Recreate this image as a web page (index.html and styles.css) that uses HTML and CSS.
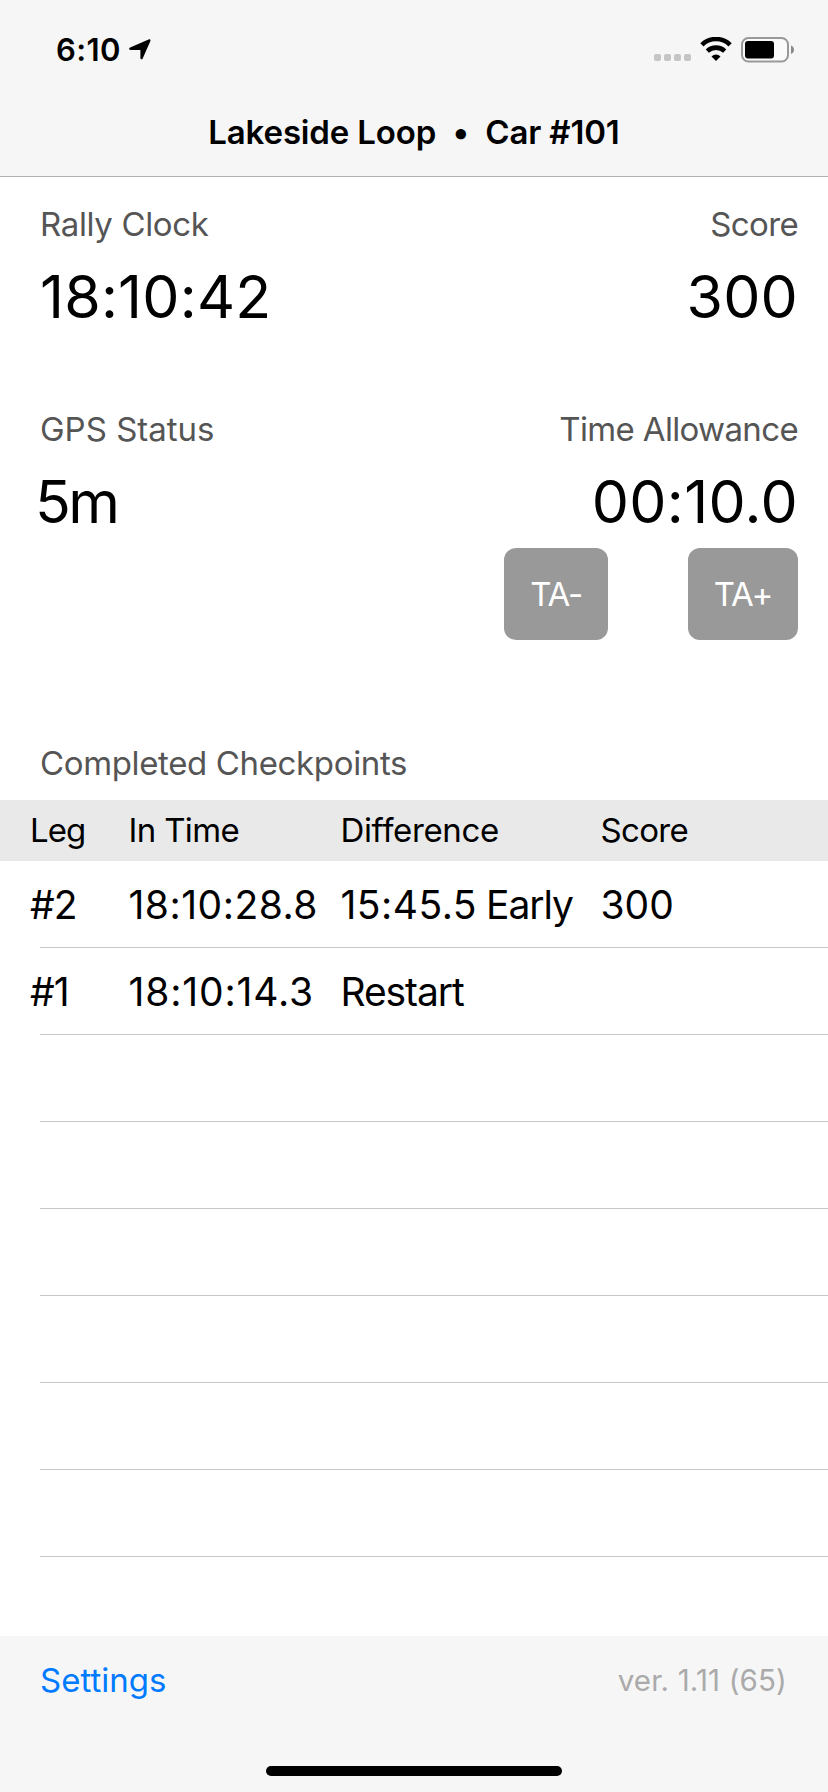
FILE: index.html
```html
<!DOCTYPE html>
<html lang="en">
<head>
<meta charset="utf-8">
<title>Lakeside Loop</title>
<link rel="stylesheet" href="styles.css">
</head>
<body>
<div class="screen">
  <header class="navbar">
    <div class="status">
      <div class="status-left">
        <span class="time">6:10</span>
        <svg class="location" width="22" height="21" viewBox="0 0 22 21"><path d="M1.1 8.5 19.6.5c1.3-.6 2.3.4 1.7 1.7L13.700 19.400c-.6 1.400-2.300 1.100-2.300-.5V10.900H1.600C-.1 10.900-.4 9.200 1.100 8.500Z"/></svg>
      </div>
      <div class="status-right">
        <div class="signal"><i></i><i></i><i></i><i></i></div>
        <svg class="wifi" width="32" height="24" viewBox="0 0 32 24">
          <path d="M1.900 7.800A20.200 20.200 0 0 1 30.100 7.800" fill="none" stroke="#000" stroke-width="4.600"/>
          <path d="M7.300 14.100A12.500 12.500 0 0 1 24.700 14.100" fill="none" stroke="#000" stroke-width="4.600"/>
          <path d="M11.500 19.400A6.500 6.500 0 0 1 20.500 19.400L16 23.900Z"/>
        </svg>
        <svg class="battery" width="54" height="26" viewBox="0 0 54 26">
          <rect x="1" y="1" width="46" height="23.500" rx="6.500" fill="#fafafa" stroke="#999" stroke-width="2"/>
          <rect x="4" y="4" width="29" height="17.500" rx="3"/>
          <path d="M50 8.500C54 10 54 15.500 50 17Z" fill="#888"/>
        </svg>
      </div>
    </div>
    <h1 class="title">Lakeside Loop &nbsp;•&nbsp; Car #101</h1>
  </header>

  <main class="content">
    <section class="stats">
      <div class="stat">
        <div class="label snug">Rally Clock</div>
        <div class="value">18:10:42</div>
      </div>
      <div class="stat right">
        <div class="label tight">Score</div>
        <div class="value">300</div>
      </div>
    </section>
    <section class="stats second">
      <div class="stat">
        <div class="label">GPS Status</div>
        <div class="value gps">5m</div>
      </div>
      <div class="stat right">
        <div class="label tight">Time Allowance</div>
        <div class="value allowance">00:10.0</div>
      </div>
    </section>
    <div class="buttons">
      <button class="btn minus">TA-</button>
      <button class="btn plus">TA+</button>
    </div>
    <h2 class="label checkpoints snug">Completed Checkpoints</h2>
    <div class="table">
      <div class="row head"><span class="leg">Leg</span><span class="tight">In Time</span><span class="snug">Difference</span><span class="tight">Score</span></div>
      <div class="row"><span class="leg">#2</span><span class="clock">18:10:28.8</span><span class="diff"><span class="clock">15:45.5</span><span class="word">Early</span></span><span>300</span></div>
      <div class="row"><span class="leg">#1</span><span class="clock narrow">18:10:14.3</span><span class="word">Restart</span><span></span></div>
      <div class="row"></div>
      <div class="row"></div>
      <div class="row"></div>
      <div class="row"></div>
      <div class="row"></div>
      <div class="row"></div>
    </div>
  </main>

  <footer class="toolbar">
    <div class="toolbar-row">
      <a class="settings">Settings</a>
      <span class="version">ver. 1.11 (65)</span>
    </div>
    <div class="home"></div>
  </footer>
</div>
</body>
</html>
```
FILE: styles.css
```css
* { box-sizing: border-box; }
body { margin: 0; background: #fff; color: #000; font-family: Inter, "Liberation Sans", sans-serif; }
.screen { width: 828px; height: 1792px; display: flex; flex-direction: column; overflow: hidden; }

.navbar { height: 177px; background: #f6f6f6; border-bottom: 1px solid #b2b2b2; }
.status { height: 88px; padding: 30px 33px 0 56px; display: flex; justify-content: space-between; align-items: flex-start; }
.status-left, .status-right { display: flex; }
.time { font-size: 31px; font-weight: 600; line-height: 40px; width: 73px; letter-spacing: .4px; }
.location { margin-top: 9px; }
.signal { display: flex; gap: 3px; margin: 24px 9px 0 0; }
.signal i { width: 7px; height: 7px; border-radius: 2px; background: #c5c5c5; }
.wifi { margin: 7px 9px 0 0; }
.battery { margin-top: 7px; }
.title { margin: 0; padding-top: 24px; text-align: center; font-size: 33px; line-height: 40px; font-weight: 600; letter-spacing: -.15px; white-space: nowrap; }

.content { flex: 1; }
.stats { display: flex; justify-content: space-between; padding: 27px 30px 0 40px; height: 205px; }
.stats.second { height: 166px; }
.stat.right { text-align: right; }
.label { font-size: 33px; line-height: 40px; color: #555; white-space: nowrap; }
.snug { letter-spacing: -.36px; }
.tight { letter-spacing: -.65px; }
.value { font-size: 59px; line-height: 72px; margin-top: 17px; letter-spacing: .2px; white-space: nowrap; }
.gps { margin-left: -5px; letter-spacing: -2.5px; }
.allowance { letter-spacing: .35px; }
.buttons { display: flex; justify-content: flex-end; gap: 80px; padding-right: 30px; height: 92px; }
.btn { border: 0; padding: 0; height: 92px; border-radius: 12px; background: #999; color: #fff; font-family: inherit; font-size: 33px; letter-spacing: -1.2px; }
.minus { width: 104px; }
.plus { width: 110px; }
.checkpoints { margin: 0; padding: 103px 0 0 40px; height: 160px; font-weight: 400; }

.row { display: grid; grid-template-columns: 98.5px 212px 260px 1fr; align-items: center; height: 87px; padding-left: 30px; font-size: 39px; white-space: nowrap; background: linear-gradient(#c6c6c6, #c6c6c6) 40px 100% / 100% 1px no-repeat; }
.row.head { height: 61px; padding-bottom: 2px; background: #e9e9e9; font-size: 33px; }
.leg { letter-spacing: -1px; }
.clock { letter-spacing: .5px; }
.clock.narrow { letter-spacing: .85px; }
.word { letter-spacing: -1.1px; }
.diff { display: flex; gap: 9px; }

.toolbar { height: 156px; background: #f6f6f6; }
.toolbar-row { display: flex; justify-content: space-between; padding: 24px 41px 0 40px; height: 130px; line-height: 40px; }
.settings { color: #007aff; font-size: 33px; }
.version { color: #aaa; font-size: 29.5px; letter-spacing: .15px; }
.home { width: 296px; height: 10px; border-radius: 5px; background: #000; margin: 0 auto; }
```
